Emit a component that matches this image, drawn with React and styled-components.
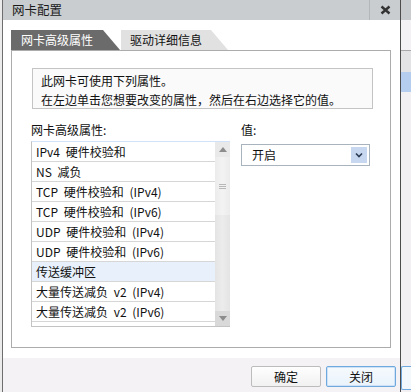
import React from 'react';
import styled, { createGlobalStyle } from 'styled-components';

const properties = [
    "IPv4 硬件校验和",
    "NS 减负",
    "TCP 硬件校验和 (IPv4)",
    "TCP 硬件校验和 (IPv6)",
    "UDP 硬件校验和 (IPv4)",
    "UDP 硬件校验和 (IPv6)",
    "传送缓冲区",
    "大量传送减负 v2 (IPv4)",
    "大量传送减负 v2 (IPv6)",
    ""
];

const GlobalStyle = createGlobalStyle`
    html, body {
        margin: 0;
        padding: 0;
        width: 411px;
        height: 392px;
        overflow: hidden;
        background: #f2f0f3;
    }
    * {
        box-sizing: border-box;
    }
    body {
        font-family: "Noto Sans CJK SC", "Noto Sans", sans-serif;
        font-size: 12px;
        color: #111;
    }
`;

const Screen = styled.div`
    display: flex;
    width: 411px;
    height: 392px;
`;

const LeftEdge = styled.div`
    width: 2px;
    background: #ebebeb;
`;

const RightEdge = styled.div`
    width: 10px;
    display: flex;
    flex-direction: column;
`;

const Strip = styled.div`
    height: ${props => props.h}px;
    flex: ${props => props.grow ? 1 : 'none'};
    background: ${props => props.color};
    border-top: ${props => props.line ? '1px solid #a9a9a9' : 'none'};
`;

const PeekButton = styled.div`
    height: 24px;
    border: 1px solid #6fa8dc;
    border-right: none;
    border-radius: 2px 0 0 2px;
    background: #f3f8fc;
`;

const Dialog = styled.div`
    width: 399px;
    display: flex;
    flex-direction: column;
    border-left: 1px solid #6e6e6e;
    border-right: 1px solid #4c4c4c;
    background: #fff;
`;

const TitleBar = styled.div`
    height: 20px;
    display: flex;
    align-items: center;
    background: #c9cdd0;
`;

const Title = styled.div`
    flex: 1;
    padding-left: 9px;
    font-size: 12.5px;
    line-height: 20px;
    color: #1a1a1a;
`;

const CloseBox = styled.div`
    width: 31px;
    height: 20px;
    display: flex;
    align-items: center;
    justify-content: center;
    border-left: 1px solid #b3b7ba;
`;

const Body = styled.div`
    flex: 1;
    padding: 10px 9px 0 8px;
    display: flex;
    flex-direction: column;
`;

const TabRow = styled.div`
    height: 20px;
    display: flex;
    gap: 1px;
`;

const Tab = styled.div`
    width: ${props => props.w}px;
    height: 20px;
    padding-left: ${props => props.active ? 10 : 9}px;
    line-height: 20px;
    background: ${props => props.active ? '#6b6b6b' : '#e1e1e1'};
    color: ${props => props.active ? '#fff' : '#111'};
    clip-path: polygon(0 0, ${props => props.w - 17}px 0, 100% 100%, 0 100%);
`;

const Panel = styled.div`
    height: 298px;
    border: 1px solid #acacac;
    padding: 17px 17px 0 19px;
`;

const InfoBox = styled.div`
    height: 41px;
    margin-left: 1px;
    padding: 2px 0 0 8px;
    border: 1px solid #c4c4c4;
    background: #fafafa;
    line-height: 19px;
    color: #111;
`;

const Columns = styled.div`
    display: grid;
    grid-template-columns: 199px 129px;
    column-gap: 11px;
    margin-top: 13px;
`;

const Label = styled.div`
    height: 16px;
    line-height: 16px;
    color: #111;
`;

const ListBox = styled.div`
    margin-top: 3px;
    height: 186px;
    display: flex;
    border: 1px solid #c3c3c3;
    border-top: 1px solid #cfe2f7;
    border-right: none;
    overflow: hidden;
`;

const Rows = styled.div`
    flex: 1;
    display: flex;
    flex-direction: column;
`;

const Item = styled.div`
    height: 20px;
    flex: none;
    padding-left: 4px;
    line-height: 19px;
    word-spacing: 3px;
    border-bottom: 1px solid #d6d6d6;
    background: ${props => props.hover ? '#e8f1fb' : '#fff'};
    white-space: nowrap;
`;

const ScrollBar = styled.div`
    width: 15px;
    display: flex;
    flex-direction: column;
    background: #e6e6e6;
`;

const ScrollArrow = styled.div`
    height: 15px;
    display: flex;
    align-items: center;
    justify-content: center;
    background: ${props => props.down ? '#d9d9d9' : '#e9e9e9'};
`;

const Thumb = styled.div`
    height: 58px;
    display: flex;
    align-items: center;
    justify-content: center;
    background: linear-gradient(to right, #ececec, #f3f3f3, #ebebeb);
`;

const Grip = styled.div`
    width: 7px;
    height: 5px;
    border-top: 1px solid #b8b8b8;
    border-bottom: 1px solid #b8b8b8;
    position: relative;
    &::after {
        content: "";
        position: absolute;
        left: 0;
        right: 0;
        top: 1px;
        border-top: 1px solid #b8b8b8;
    }
`;

const Track = styled.div`
    flex: 1;
    background: linear-gradient(to right, #e4e4e4, #ececec, #e4e4e4);
`;

const Select = styled.div`
    margin-top: 6px;
    height: 22px;
    display: flex;
    align-items: center;
    padding: 2px;
    border: 1px solid #a9b3bd;
    background: #fff;
`;

const SelectText = styled.div`
    flex: 1;
    padding-left: 8px;
    line-height: 16px;
`;

const SelectArrow = styled.div`
    width: 16px;
    height: 16px;
    display: flex;
    align-items: center;
    justify-content: center;
    background: #c7d7f0;
`;

const Footer = styled.div`
    height: 34px;
    margin-top: 10px;
    display: flex;
    justify-content: flex-end;
    align-items: flex-start;
    gap: 5px;
    padding: 8px 4px 0 0;
    background: #f4f2f5;
`;

const Button = styled.div`
    width: 70px;
    height: 21px;
    display: flex;
    align-items: center;
    justify-content: center;
    border: 1px solid ${props => props.primary ? '#6fa8dc' : '#bcbcbc'};
    border-radius: 2px;
    background: ${props => props.primary
        ? 'linear-gradient(#f6fafe, #e9f2fb)'
        : 'linear-gradient(#fefefe, #f1f1f1)'};
    box-shadow: ${props => props.primary ? 'inset 0 0 0 1px #cde2f6' : 'none'};
    color: #111;
`;

function CloseIcon() {
    return (
        <svg width="11" height="10" viewBox="0 0 11 10">
            <path d="M1.5 1.5 L9.5 8.5 M9.5 1.5 L1.5 8.5" stroke="#333" strokeWidth="2.4" />
        </svg>
    );
}

function Triangle({ down }) {
    return (
        <svg width="8" height="5" viewBox="0 0 8 5">
            <path d={down ? "M0 0 H8 L4 5 Z" : "M0 5 H8 L4 0 Z"} fill="#8c8c8c" />
        </svg>
    );
}

function Chevron() {
    return (
        <svg width="8" height="6" viewBox="0 0 8 6">
            <path d="M1 1.5 L4 4.5 L7 1.5" stroke="#2b3b52" strokeWidth="1.6" fill="none" />
        </svg>
    );
}

export default function App() {
    return (
        <Screen>
            <GlobalStyle />
            <LeftEdge />
            <Dialog>
                <TitleBar>
                    <Title>网卡配置</Title>
                    <CloseBox><CloseIcon /></CloseBox>
                </TitleBar>
                <Body>
                    <TabRow>
                        <Tab active w={109}>网卡高级属性</Tab>
                        <Tab w={107}>驱动详细信息</Tab>
                    </TabRow>
                    <Panel>
                        <InfoBox>
                            <div>此网卡可使用下列属性。</div>
                            <div>在左边单击您想要改变的属性，然后在右边选择它的值。</div>
                        </InfoBox>
                        <Columns>
                            <div>
                                <Label>网卡高级属性:</Label>
                                <ListBox>
                                    <Rows>
                                        {properties.map((p, i) => (
                                            <Item key={i} hover={p === "传送缓冲区"}>{p}</Item>
                                        ))}
                                    </Rows>
                                    <ScrollBar>
                                        <ScrollArrow><Triangle /></ScrollArrow>
                                        <Thumb><Grip /></Thumb>
                                        <Track />
                                        <ScrollArrow down><Triangle down /></ScrollArrow>
                                    </ScrollBar>
                                </ListBox>
                            </div>
                            <div>
                                <Label>值:</Label>
                                <Select>
                                    <SelectText>开启</SelectText>
                                    <SelectArrow><Chevron /></SelectArrow>
                                </Select>
                            </div>
                        </Columns>
                    </Panel>
                </Body>
                <Footer>
                    <Button>确定</Button>
                    <Button primary>关闭</Button>
                </Footer>
            </Dialog>
            <RightEdge>
                <Strip h={20} color="#c8cccf" />
                <Strip h={30} color="#f4f2f5" />
                <Strip h={22} color="#e3e3e6" line />
                <Strip h={20} color="#b5cdef" />
                <Strip grow color="#f2f0f3" />
                <PeekButton />
                <Strip h={2} color="#f2f0f3" />
            </RightEdge>
        </Screen>
    );
}
